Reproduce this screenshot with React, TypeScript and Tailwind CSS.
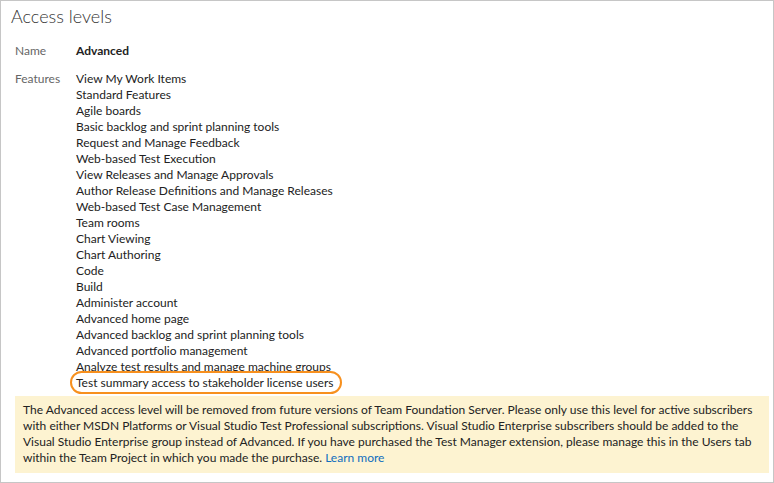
import React from 'react';

const features = [
  'View My Work Items',
  'Standard Features',
  'Agile boards',
  'Basic backlog and sprint planning tools',
  'Request and Manage Feedback',
  'Web-based Test Execution',
  'View Releases and Manage Approvals',
  'Author Release Definitions and Manage Releases',
  'Web-based Test Case Management',
  'Team rooms',
  'Chart Viewing',
  'Chart Authoring',
  'Code',
  'Build',
  'Administer account',
  'Advanced home page',
  'Advanced backlog and sprint planning tools',
  'Advanced portfolio management',
  'Analyze test results and manage machine groups',
];

const App: React.FC = () => {
  return (
    <div
      className="w-[774px] h-[483px] bg-white border border-[#c6c6c6] text-[12px] leading-[16px] text-[#222]"
      style={{ fontFamily: 'Lato, "Open Sans", sans-serif' }}
    >
      <h1 className="pl-[10px] pt-[3px] text-[18px] leading-[24px] font-light text-[#333]">Access levels</h1>

      <div className="pl-[14px] pt-[15px]">
        {/* Nombre */}
        <div className="flex">
          <div className="w-[61px] text-[#666]">Name</div>
          <div className="font-bold">Advanced</div>
        </div>

        {/* Features */}
        <div className="flex mt-[12px]">
          <div className="w-[61px] text-[#666]">Features</div>
          <div className="flex flex-col">
            {features.map(f => (
              <div key={f}>{f}</div>
            ))}
            <div className="relative">
              Test summary access to stakeholder license users
              <span className="absolute left-[-6px] right-[-9px] top-[-4px] bottom-[-3px] rounded-full border-2 border-[#f7901e]" />
            </div>
          </div>
        </div>

        <div className="mt-[5px] mr-[4px] bg-[#fdf3d1] px-[8px] pt-[6px] pb-[7px]">
          The Advanced access level will be removed from future versions of Team Foundation Server. Please only use this level for active subscribers with either MSDN Platforms or Visual Studio Test Professional subscriptions. Visual Studio Enterprise subscribers should be added to the Visual Studio Enterprise group instead of Advanced. If you have purchased the Test Manager extension, please manage this in the Users tab within the Team Project in which you made the purchase.{' '}
          <a href="#" className="text-[#106ebe]">Learn more</a>
        </div>
      </div>
    </div>
  );
};

export default App;
